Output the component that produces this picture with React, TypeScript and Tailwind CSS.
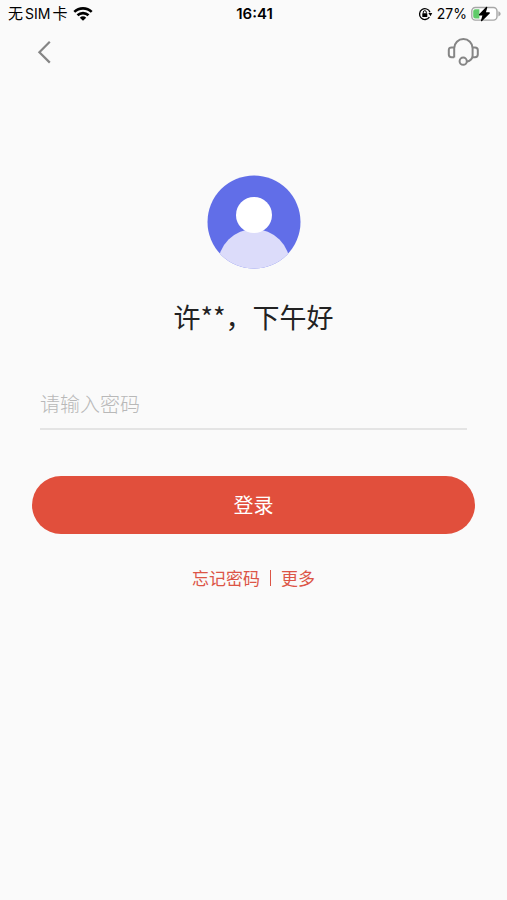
import { useState } from "react";

const StatusBar: React.FC = () => {
  return (
    <div className="grid grid-cols-3 items-center h-7 pl-2 pr-[6px] text-black">
      <div className="flex items-center gap-[6px]">
        <span className="flex items-center gap-[2px] text-[15px] whitespace-nowrap">
          <span>无</span>
          <span className="text-sm">SIM</span>
          <span>卡</span>
        </span>
        <svg width="20" height="14" viewBox="0 0 20 14" aria-hidden="true">
          <g fill="none" stroke="black" strokeWidth="2.6">
            <path d="M1.3 4.9a12.6 12.6 0 0 1 17.4 0" />
            <path d="M4.5 8.3a8 8 0 0 1 11 0" />
          </g>
          <path d="M10 13.8 6.8 10.7a4.7 4.7 0 0 1 6.4 0Z" fill="black" />
        </svg>
      </div>

      <span className="text-center text-[15px] font-semibold">16:41</span>

      <div className="flex items-center justify-end gap-1">
        {/* Rotation lock */}
        <svg width="15" height="14" viewBox="0 0 15 14" aria-hidden="true">
          <path d="M11.4 10.2A5.4 5.4 0 1 1 12 5.2" fill="none" stroke="black" strokeWidth="1.3" />
          <path d="M10.4 6h3.8l-1.6 3.2Z" fill="black" />
          <rect x="4.3" y="6.2" width="5" height="3.8" rx="0.6" fill="black" />
          <path d="M5.3 6.5V5.2a1.5 1.5 0 0 1 3 0v1.3" fill="none" stroke="black" />
        </svg>
        <span className="text-sm">27%</span>
        {/* Battery */}
        <svg width="30" height="16" viewBox="1 0 30 16" aria-hidden="true">
          <rect x="1.8" y="1.5" width="25.2" height="12.6" rx="3.6" fill="white" stroke="#a6a6a6" strokeWidth="1.4" />
          <path d="M28.4 5.2c1.6.6 2.2 1.6 2.2 2.6s-.6 2-2.2 2.6Z" fill="#a6a6a6" />
          <path d="M5.2 3.2H9.4v9.2H5.2a2 2 0 0 1-2-2V5.2a2 2 0 0 1 2-2Z" fill="#5fcb69" />
          <path
            d="M16.6 1.4 9.6 8.8h3.8l-1.8 5.8 7.6-7.6h-4.2Z"
            fill="black"
            stroke="black"
            strokeWidth="1.4"
            strokeLinejoin="round"
          />
        </svg>
      </div>
    </div>
  );
};

const Header: React.FC = () => {
  return (
    <header className="flex items-center justify-between h-12 pl-8 pr-7">
      <button type="button" aria-label="返回" className="p-1">
        <svg width="16" height="24" viewBox="0 0 16 24" fill="none" stroke="#858585" strokeWidth="2.2">
          <path d="M13.8 1.8 3.4 12.2l10.4 10.4" />
        </svg>
      </button>
      <button type="button" aria-label="客服">
        <svg width="32" height="30" viewBox="0 0 32 30" fill="none" stroke="#858585" strokeWidth="2">
          <path d="M7.2 20.6V11.2a9.2 9.2 0 0 1 18.4 0v7.4c0 3.2-2.2 5.4-6 6.2" />
          <path d="M7.2 10.4H4.6c-1.8 0-2.8 1-2.8 2.6v4.6c0 1.6 1 2.6 2.8 2.6h2.6" />
          <path d="M25.6 10.4h2.4c1.8 0 2.8 1 2.8 2.6v4.6c0 1.6-1 2.6-2.8 2.6h-2.6" />
          <circle cx="16.2" cy="24.2" r="3.6" />
        </svg>
      </button>
    </header>
  );
};

const Avatar: React.FC = () => {
  return (
    <svg width="94" height="94" viewBox="0 0 94 94" aria-hidden="true">
      <clipPath id="avatar-clip">
        <circle cx="47" cy="47" r="46.5" />
      </clipPath>
      <g clipPath="url(#avatar-clip)">
        <rect width="94" height="94" fill="#616ee8" />
        <circle cx="47" cy="90" r="36" fill="#dcdcfa" />
        <circle cx="47" cy="40" r="18" fill="white" />
      </g>
    </svg>
  );
};

const App: React.FC = () => {
  const [password, setPassword] = useState("");

  return (
    <div className="min-h-screen bg-[#fafafa] font-['Inter','Noto_Sans_CJK_SC',sans-serif]">
      <StatusBar />
      <Header />

      <main className="flex flex-col items-center px-8 pt-[99px] font-['Noto_Sans_CJK_SC',sans-serif]">
        <Avatar />
        <h1 className="mt-7 text-[27px] leading-10 text-[#222222]">许**，下午好</h1>

        <form className="w-full mt-[45px]" onSubmit={(e) => e.preventDefault()}>
          <div className="px-2">
            <input
              type="password"
              aria-label="密码"
              placeholder="请输入密码"
              value={password}
              onChange={(e) => setPassword(e.target.value)}
              className="block w-full h-12 pb-1 border-b-2 border-[#e4e4e4] bg-transparent text-xl font-light text-[#222222] placeholder:text-[#b8b8b8] focus:outline-none"
            />
          </div>
          <button type="submit" className="block w-full h-[58px] mt-[46px] rounded-full bg-[#e14f3c] text-xl text-white">
            登录
          </button>
        </form>

        <div className="flex items-center mt-8 gap-[10px] text-[17px] leading-6 text-[#dc5546]">
          <a href="#">忘记密码</a>
          <span className="w-px h-4 bg-[#dc5546]" />
          <a href="#">更多</a>
        </div>
      </main>
    </div>
  );
};

export default App;
